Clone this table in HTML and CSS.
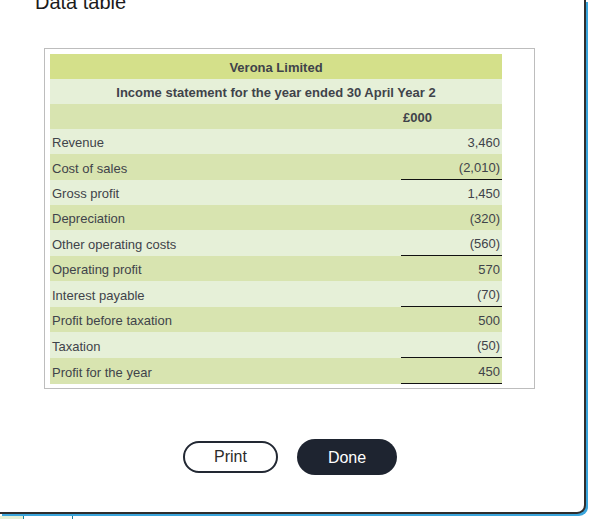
FILE: index.html
```html
<!DOCTYPE html>
<html>
<head>
<meta charset="utf-8">
<link rel="stylesheet" href="styles.css">
</head>
<body>
<div class="modal">
  <h1 class="title">Data table</h1>
  <div class="box">
    <table class="fin">
      <tr class="h1"><th colspan="2">Verona Limited</th></tr>
      <tr class="h2"><th colspan="2">Income statement for the year ended 30 April Year 2</th></tr>
      <tr class="dark"><th></th><th class="cur">£000</th></tr>
      <tr class="light"><td class="lbl">Revenue</td><td class="num">3,460</td></tr>
      <tr class="dark"><td class="lbl">Cost of sales</td><td class="num rule">(2,010)</td></tr>
      <tr class="light"><td class="lbl">Gross profit</td><td class="num">1,450</td></tr>
      <tr class="dark"><td class="lbl">Depreciation</td><td class="num">(320)</td></tr>
      <tr class="light"><td class="lbl">Other operating costs</td><td class="num rule">(560)</td></tr>
      <tr class="dark"><td class="lbl">Operating profit</td><td class="num">570</td></tr>
      <tr class="light"><td class="lbl">Interest payable</td><td class="num rule">(70)</td></tr>
      <tr class="dark"><td class="lbl">Profit before taxation</td><td class="num">500</td></tr>
      <tr class="light"><td class="lbl">Taxation</td><td class="num rule">(50)</td></tr>
      <tr class="dark"><td class="lbl">Profit for the year</td><td class="num rule">450</td></tr>
    </table>
  </div>
  <div class="actions">
    <button class="btn print">Print</button>
    <button class="btn done">Done</button>
  </div>
</div>
<div class="under">
  <div class="u-green"></div>
  <div class="u-line"></div>
  <div class="u-gap"></div>
  <div class="u-line"></div>
</div>
</body>
</html>
```

FILE: styles.css
```css
html, body {
  margin: 0;
  padding: 0;
  background: #ffffff;
  overflow: hidden;
}
body {
  font-family: "Liberation Sans", Arial, sans-serif;
  width: 596px;
  height: 519px;
}
.modal {
  width: 584px;
  height: 512px;
  background: #ffffff;
  border-right: 2px solid #2e2e2e;
  border-bottom: 2px solid #2e2e2e;
  border-bottom-right-radius: 9px;
  box-shadow: 2px 2px 0 0 #3aa5dc;
  overflow: hidden;
}
.title {
  margin: -9px 0 0 35px;
  font-size: 20px;
  line-height: 23px;
  font-weight: normal;
  color: #1b1b1b;
}
.box {
  margin: 34px 0 0 44px;
  width: 478px;
  padding: 5px 6px 4px 5px;
  border: 1px solid #bdbdbd;
}
.fin {
  width: 452px;
  border-collapse: separate;
  border-spacing: 0;
  font-size: 13px;
  color: #3f434a;
}
.fin th, .fin td {
  padding: 6px 2px 4px 2px;
  line-height: 15px;
}
.fin th {
  font-weight: bold;
  text-align: center;
}
.fin .h1 { background: #d4e08a; }
.fin .h2 { background: #e6f0d8; }
.fin .dark { background: #d8e4b0; }
.fin .light { background: #e6f0d8; }
.fin .cur {
  text-align: left;
  width: 97px;
}
.fin .lbl {
  text-align: left;
}
.fin .num {
  width: 97px;
  text-align: right;
}
.fin .rule {
  border-bottom: 1px solid #111111;
}
.actions {
  display: flex;
  justify-content: center;
  align-items: center;
  gap: 19px;
  margin-top: 50px;
  padding-right: 4px;
}
.btn {
  font-family: "Liberation Sans", Arial, sans-serif;
  border-radius: 18px;
  cursor: pointer;
}
.print {
  width: 95px;
  height: 32px;
  background: #ffffff;
  border: 2px solid #222833;
  color: #2b2b2b;
  font-size: 16px;
  padding-top: 0;
}
.done {
  width: 100px;
  height: 36px;
  background: #1e2430;
  border: none;
  color: #ffffff;
  font-size: 16px;
  padding-top: 2px;
}
.under {
  display: flex;
  height: 3px;
  margin-top: 2px;
}
.u-green { width: 23px; background: #e4f0d6; }
.u-line { width: 1px; background: #1a7f9a; }
.u-gap { width: 48px; }
```
